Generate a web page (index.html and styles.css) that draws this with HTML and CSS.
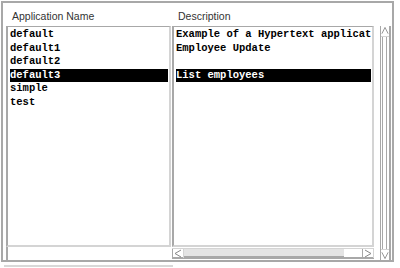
FILE: index.html
```html
<!DOCTYPE html>
<html>
<head>
<meta charset="utf-8">
<link rel="stylesheet" href="styles.css">
</head>
<body>
<div class="frame">
  <div class="head">
    <span class="h1">Application Name</span>
    <span class="h2">Description</span>
  </div>
  <div class="body">
    <div class="leftcol">
      <div class="list left">
        <div class="row">default</div>
        <div class="row">default1</div>
        <div class="row">default2</div>
        <div class="row sel">default3</div>
        <div class="row">simple</div>
        <div class="row">test</div>
      </div>
      <div class="field"></div>
    </div>
    <div class="rightcol">
      <div class="rmain">
        <div class="list desc">
          <div class="row">Example of a Hypertext applicat</div>
          <div class="row">Employee Update</div>
          <div class="row">&nbsp;</div>
          <div class="row sel">List employees</div>
        </div>
        <div class="hscroll">
          <div class="arrow">
            <svg width="10" height="9" viewBox="0 0 10 9"><polyline points="8,1 2,4.5 8,8" fill="none" stroke="#888" stroke-width="1"/></svg>
          </div>
          <div class="hthumb"></div>
          <div class="htrough"></div>
          <div class="arrow">
            <svg width="10" height="9" viewBox="0 0 10 9"><polyline points="2,1 8,4.5 2,8" fill="none" stroke="#888" stroke-width="1"/></svg>
          </div>
        </div>
      </div>
      <div class="vscroll">
        <div class="varrow">
          <svg width="9" height="10" viewBox="0 0 9 10"><polyline points="1,8 4.5,1 8,8" fill="none" stroke="#888" stroke-width="1"/></svg>
        </div>
        <div class="vthumb"></div>
        <div class="varrow">
          <svg width="9" height="10" viewBox="0 0 9 10"><polyline points="1,2 4.5,9 8,2" fill="none" stroke="#888" stroke-width="1"/></svg>
        </div>
      </div>
    </div>
  </div>
</div>
<div class="under"></div>
</body>
</html>
```
FILE: styles.css
```css
html, body {
  margin: 0;
  padding: 0;
  background: #ffffff;
}
body {
  padding: 1px 0 0 1px;
  font-family: "Liberation Sans", Arial, sans-serif;
}
.frame {
  box-sizing: border-box;
  width: 393px;
  height: 261px;
  border: 2px solid #a8a8a8;
  padding: 0 0 0 3px;
  display: flex;
  flex-direction: column;
  background: #fff;
}
.head {
  height: 23px;
  display: flex;
  align-items: center;
  font-size: 10.5px;
  color: #333;
  padding-top: 3px;
  box-sizing: border-box;
}
.h1 { margin-left: 6px; width: 166px; }
.body {
  flex: 1;
  display: flex;
}
.leftcol {
  width: 165px;
  display: flex;
  flex-direction: column;
}
.list {
  box-sizing: border-box;
  border-left: 2px solid #a8a8a8;
  border-top: 1px solid #a8a8a8;
  border-right: 2px solid #d4d4d4;
  border-bottom: 2px solid #d4d4d4;
  background: #fff;
  font-family: "Liberation Mono", "Courier New", monospace;
  font-weight: bold;
  font-size: 10.5px;
  color: #000;
  padding-top: 1px;
  overflow: hidden;
  white-space: nowrap;
}
.left {
  height: 221px;
  padding-left: 2px;
  padding-right: 1px;
}
.row {
  height: 13.5px;
  line-height: 13.5px;
}
.sel {
  background: #000;
  color: #fff;
}
.field {
  flex: 1;
  border-left: 2px solid #a8a8a8;
  box-sizing: border-box;
}
.rightcol {
  display: flex;
  margin-left: 1px;
}
.rmain {
  width: 202px;
  display: flex;
  flex-direction: column;
}
.desc {
  height: 221px;
  padding-left: 2px;
  padding-right: 1px;
}
.hscroll {
  margin-top: 1px;
  height: 11px;
  display: flex;
  box-sizing: border-box;
  border-top: 1px solid #d4d4d4;
  border-bottom: 2px solid #a8a8a8;
}
.arrow {
  width: 10px;
  height: 9px;
  border-left: 1px solid #a8a8a8;
  border-right: 1px solid #d4d4d4;
  display: flex;
}
.hthumb {
  width: 160px;
  background: #e4e4e4;
  border-bottom: 1px solid #a8a8a8;
  box-sizing: border-box;
}
.htrough {
  flex: 1;
  background: #fff;
}
.vscroll {
  margin-left: 6px;
  width: 11px;
  display: flex;
  flex-direction: column;
  box-sizing: border-box;
  border-left: 1px solid #a8a8a8;
  border-right: 2px solid #a8a8a8;
}
.varrow {
  height: 10px;
  display: flex;
  border-bottom: 1px solid #d4d4d4;
}
.varrow:last-child {
  border-bottom: none;
  border-top: 1px solid #d4d4d4;
}
.vthumb {
  flex: 1;
  margin: 0 2px 0 1px;
  border-left: 1px solid #a8a8a8;
  border-right: 1px solid #a8a8a8;
  background: #fff;
}
.under {
  margin: 3px 0 0 3px;
  width: 169px;
  height: 2px;
  background: #d8d8d8;
}
```
